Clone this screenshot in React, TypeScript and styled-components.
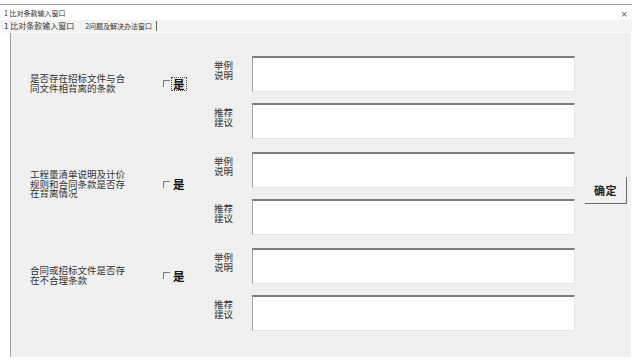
import styled, { createGlobalStyle } from 'styled-components'

const GlobalStyle = createGlobalStyle`
  html, body {
    margin: 0;
    padding: 0;
    background: #ffffff;
  }
  body {
    font-family: "Noto Sans CJK SC", "Noto Sans", sans-serif;
    color: #1a1a1a;
  }
`

const Window = styled.div`
  width: 639px;
  height: 364px;
  background: #ffffff;
  display: flex;
  flex-direction: column;
  overflow: hidden;
`

const TitleBar = styled.div`
  height: 15px;
  margin-top: 4px;
  margin-right: 7px;
  border-top: 1px solid #a8a8a8;
  display: flex;
  align-items: center;
  justify-content: space-between;
  padding: 0 4px 0 4px;
`

const Title = styled.span`
  font-size: 7px;
  line-height: 8px;
  color: #333;
`

const Close = styled.span`
  font-family: "DejaVu Sans", sans-serif;
  font-size: 9px;
  color: #555;
  margin-top: 2px;
`

const TabStrip = styled.div`
  height: 12px;
  display: flex;
  align-items: center;
  background: #f3f3f3;
  margin-right: 7px;
  border-bottom: 1px solid #fafafa;
`

const Tab = styled.span<{ $active?: boolean }>`
  font-size: ${({ $active }) => ($active ? '7px' : '8px')};
  line-height: 10px;
  color: #333;
  padding: 0 4px;
  margin-left: ${({ $active }) => ($active ? '3px' : '0')};
  border-right: ${({ $active }) => ($active ? '1px solid #666' : 'none')};
`

const Body = styled.div`
  display: flex;
  padding-left: 10px;
  height: 324px;
`

const Panel = styled.div`
  width: 621px;
  background: #f0f0f0;
  border-left: 1px solid #a0a0a0;
  display: flex;
  padding: 23px 5px 0 19px;
  box-sizing: border-box;
`

const Groups = styled.div`
  display: flex;
  flex-direction: column;
  gap: 13px;
`

const Group = styled.div`
  display: grid;
  grid-template-columns: 133px 51px 38px 323px;
  grid-template-rows: 36px 36px;
  row-gap: 11px;
`

const QuestionRow = styled.div`
  grid-column: 1 / span 2;
  grid-row: 1 / span 2;
  display: flex;
  align-items: center;
  align-self: start;
  margin-top: 18px;
`

const Question = styled.div`
  width: 133px;
  font-size: 9.5px;
  line-height: 9.5px;
  color: #333;
  white-space: pre-line;
`

const Check = styled.span`
  display: flex;
  align-items: center;
`

const CheckBox = styled.span`
  width: 6px;
  height: 6px;
  border-top: 1px solid #7a7a7a;
  border-left: 1px solid #7a7a7a;
  background: #f0f0f0;
`

const CheckText = styled.span<{ $focused?: boolean }>`
  font-size: 11.5px;
  font-weight: 700;
  line-height: 12px;
  color: #111;
  margin-left: 2px;
  padding: 0 1px;
  outline: ${({ $focused }) => ($focused ? '1px dotted #444' : 'none')};
`

const FieldLabel = styled.div<{ $row: number }>`
  grid-column: 3;
  grid-row: ${({ $row }) => $row};
  font-size: 9.5px;
  line-height: 10px;
  color: #333;
  padding-top: 4px;
  white-space: pre-line;
`

const TextBox = styled.div<{ $row: number }>`
  grid-column: 4;
  grid-row: ${({ $row }) => $row};
  background: #ffffff;
  border-top: 2px solid #7c7c7c;
  border-left: 1px solid #a0a0a0;
  border-right: 1px solid #e6e6e6;
  border-bottom: 1px solid #e6e6e6;
  box-sizing: border-box;
`

const ButtonCol = styled.div`
  display: flex;
  align-items: center;
  margin-left: 10px;
  padding-bottom: 32px;
`

const Button = styled.button`
  width: 42px;
  height: 27px;
  background: #f0f0f0;
  border: none;
  border-right: 1px solid #6a6a6a;
  border-bottom: 1px solid #6a6a6a;
  font-family: "Noto Sans CJK SC", sans-serif;
  font-size: 11px;
  font-weight: 700;
  color: #222;
  padding: 0;
  letter-spacing: 0.5px;
`

const questions = [
  { text: '是否存在招标文件与合\n同文件相背离的条款', focused: true },
  { text: '工程量清单说明及计价\n规则和合同条款是否存\n在背离情况', focused: false },
  { text: '合同或招标文件是否存\n在不合理条款', focused: false },
]

const App = () => {
  return (
    <>
      <GlobalStyle />
      <Window>
        <TitleBar>
          <Title>1 比对条款输入窗口</Title>
          <Close>×</Close>
        </TitleBar>
        <TabStrip>
          <Tab>1 比对条款输入窗口</Tab>
          <Tab $active>2问题及解决办法窗口</Tab>
        </TabStrip>
        <Body>
          <Panel>
            <Groups>
              {questions.map((q) => (
                <Group key={q.text}>
                  <QuestionRow>
                    <Question>{q.text}</Question>
                    <Check>
                      <CheckBox />
                      <CheckText $focused={q.focused}>是</CheckText>
                    </Check>
                  </QuestionRow>
                  <FieldLabel $row={1}>{'举例\n说明'}</FieldLabel>
                  <TextBox $row={1} />
                  <FieldLabel $row={2}>{'推荐\n建议'}</FieldLabel>
                  <TextBox $row={2} />
                </Group>
              ))}
            </Groups>
            <ButtonCol>
              <Button>确定</Button>
            </ButtonCol>
          </Panel>
        </Body>
      </Window>
    </>
  )
}

export default App
